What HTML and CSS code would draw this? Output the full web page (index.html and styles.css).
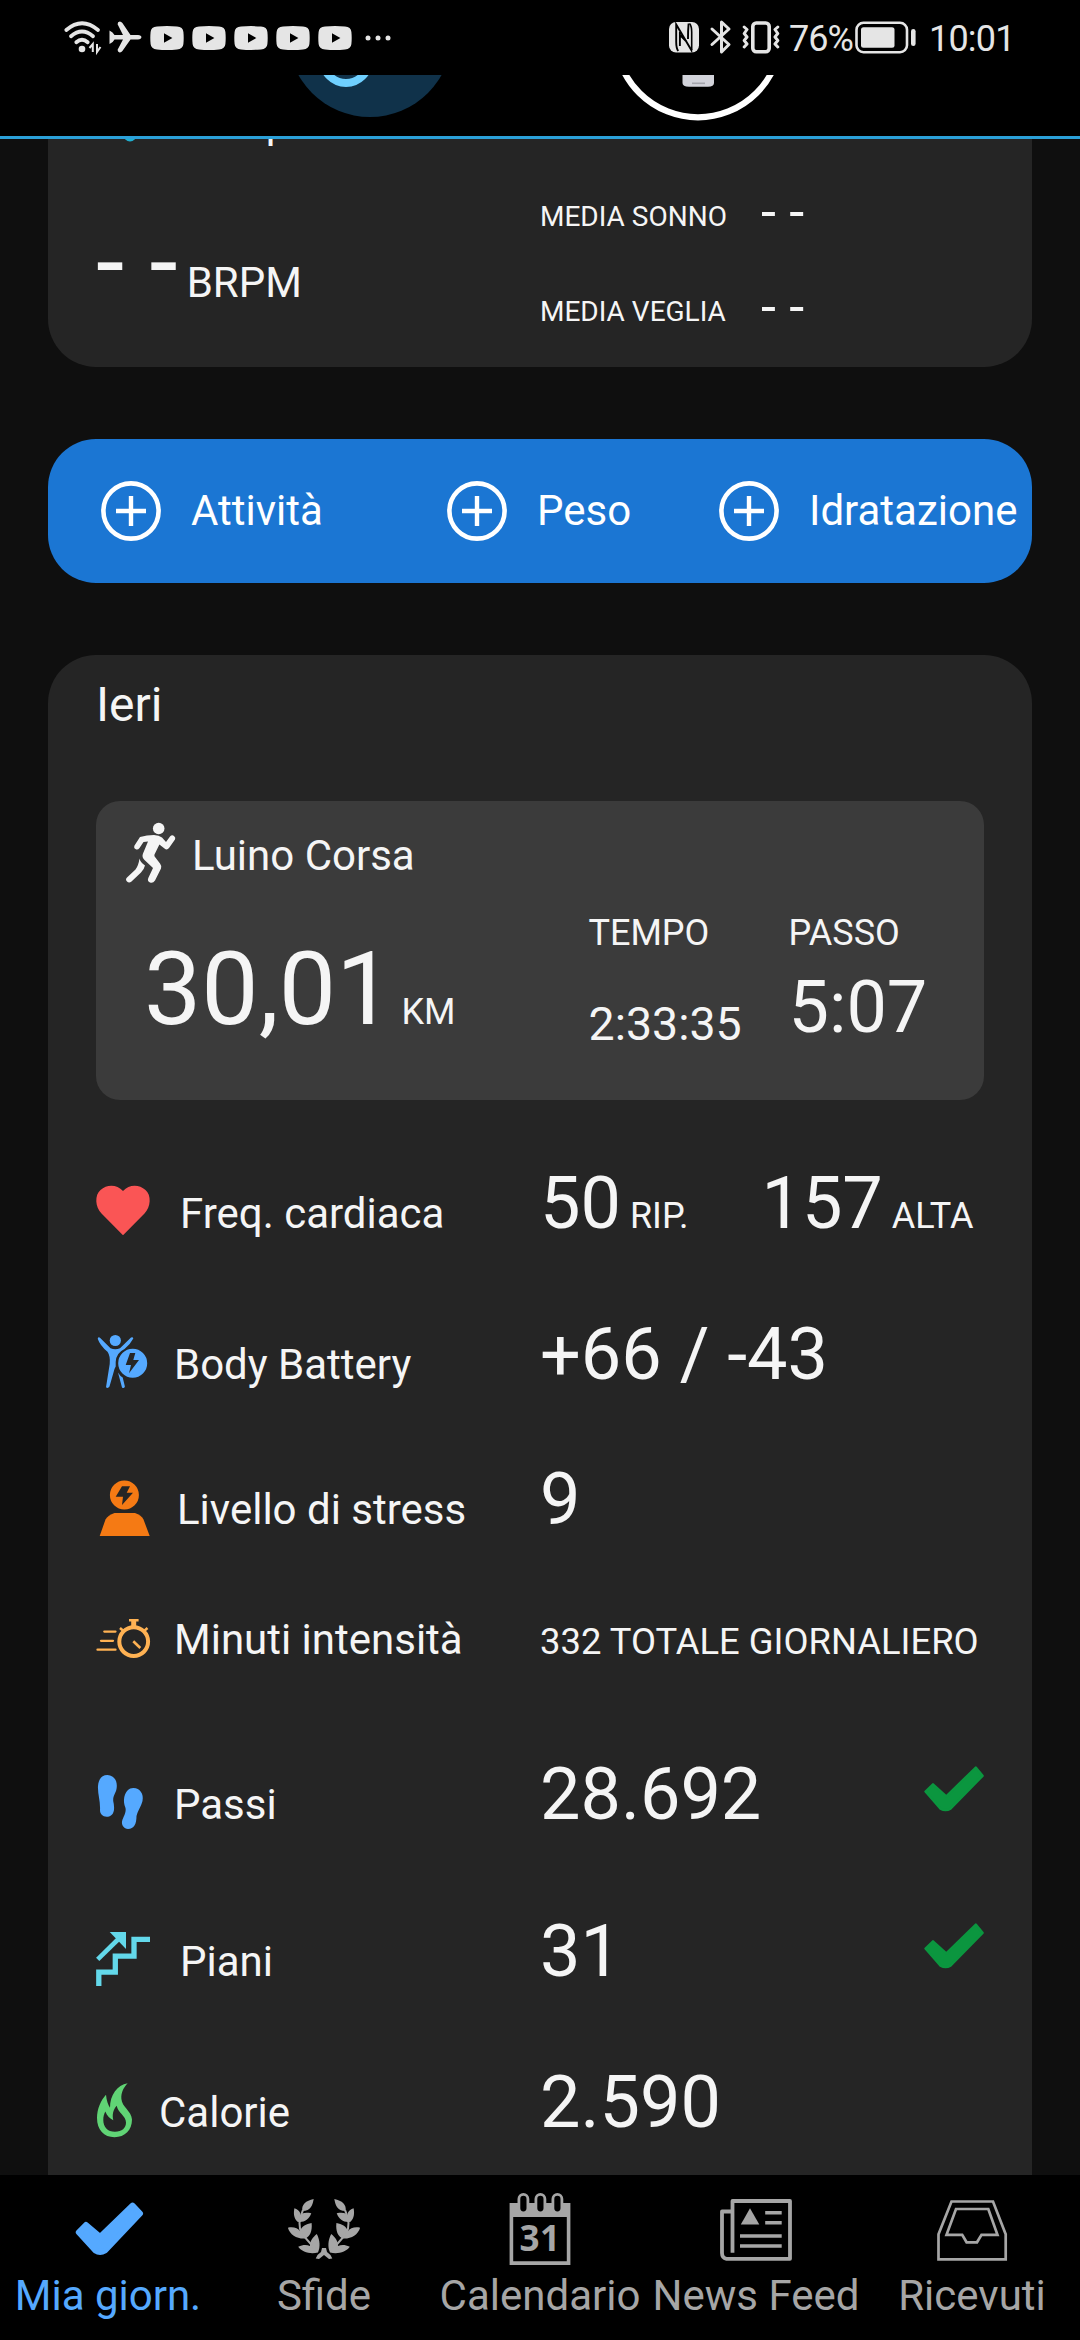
FILE: index.html
```html
<!DOCTYPE html>
<html lang="it">
<head>
<meta charset="utf-8">
<title>Mia giornata</title>
<link rel="stylesheet" href="styles.css">
</head>
<body>
<svg class="defs" aria-hidden="true">
  <symbol id="yt" viewBox="0 0 34 24"><path fill-rule="evenodd" d="M7 .6Q17-.4 27 .6Q33 1 33.4 6Q34 12 33.4 18Q33 23 27 23.4Q17 24.4 7 23.4Q1 23 .6 18Q0 12 .6 6Q1 1 7 .6ZM14 7.3V16.7L22.4 12Z"/></symbol>
  <symbol id="plus" viewBox="0 0 60 60"><circle cx="30" cy="30" r="27.6" fill="none" stroke="#fff" stroke-width="4.6"/><path d="M30 15V45M15 30H45" stroke="#fff" stroke-width="4.4"/></symbol>
  <symbol id="done" viewBox="0 0 60 46"><path d="M1.5 25.5L9 18.3L22.3 30.3L51.8 1.5L58.6 9.8L26.5 42.6Q21.5 45.6 16.5 42.6Z" fill="#0b963f" stroke="#0b963f" stroke-width="2.4" stroke-linejoin="round"/></symbol>
</svg>

<header class="header">
  <div class="status">
    <svg class="wifi" width="38" height="32" viewBox="0 0 38 32" fill="none" stroke="#e5e5e5" stroke-width="3.8" stroke-linecap="round"><path d="M2.3 9Q18 -4.5 34 9M7 15.3Q18 5.8 29 15.3M12.3 21.3Q18 16.3 23.7 21.3"/><circle cx="18" cy="28" r="3.3" fill="#e5e5e5" stroke="none"/><path stroke-width="2" stroke-linecap="butt" d="M28.8 31V23L25.5 27M33 23V31L36.5 26"/></svg>
    <svg class="plane" width="33" height="32" viewBox="0 0 33 32"><path d="M.5 9.5Q4 11 5.5 14H14L8.6 3.2Q8.5.6 10.8.4Q12.3.4 13.4 2L21.5 14H29Q32.4 14.3 32.4 16.2Q32.4 18 29 18.4H21.5L13.4 30Q12.3 31.6 10.6 31.4Q8.5 31 8.6 28.8L14 18.4H5.5Q4 21.5.5 23Z"/></svg>
    <div class="videos">
      <svg width="34" height="24"><use href="#yt"/></svg><svg width="34" height="24"><use href="#yt"/></svg><svg width="34" height="24"><use href="#yt"/></svg><svg width="34" height="24"><use href="#yt"/></svg><svg width="34" height="24"><use href="#yt"/></svg>
    </div>
    <svg class="more" width="26" height="6" viewBox="0 0 26 6"><circle cx="3" cy="3" r="2.5"/><circle cx="13" cy="3" r="2.5"/><circle cx="23" cy="3" r="2.5"/></svg>
    <svg class="nfc" width="30" height="31" viewBox="0 0 30 31"><rect width="30" height="30.5" rx="7"/><path d="M9.2 29Q7.2 26 7.2 20V2.500L22.300 28V27M10.900 10V24M11.500 13.500L17.500 19.500M19.600 1.500Q19 8 19 17" stroke="#000" stroke-width="1.900" fill="none"/><path d="M20.500 1.500Q22.700 4 22.700 10V28" stroke="#000" stroke-width="1.600" fill="none"/></svg>
    <svg class="bt" width="22" height="34" viewBox="0 0 22 34" fill="none" stroke="#e5e5e5" stroke-width="3" stroke-linejoin="round" stroke-linecap="round"><path d="M2 9L19 24.5L11.5 32V2L19 9L2 24.5"/></svg>
    <svg class="vibrate" width="38" height="33" viewBox="0 0 38 33" fill="none" stroke="#e5e5e5" stroke-width="3" stroke-linejoin="round" stroke-linecap="round"><rect x="10.8" y="2" width="16.4" height="28.8" rx="3.5" stroke-width="3.6"/><path d="M2.2 6L5 8.5L2.2 12.5L5 16L2.2 19.5L5 23L2.2 26M35.8 6L33 8.5L35.8 12.5L33 16L35.8 19.5L33 23L35.8 26"/></svg>
    <span class="pct">76%</span>
    <svg class="battery" width="62" height="33" viewBox="0 0 62 33"><rect x="1.5" y="1.8" width="50.5" height="29.4" rx="7" fill="none" stroke="#e5e5e5" stroke-width="2.6"/><rect x="6" y="6.3" width="33.5" height="20.4" rx="2.5"/><rect x="56" y="8" width="4.6" height="17" rx="2.3"/></svg>
    <span class="time">10:01</span>
  </div>
  <div class="devices">
    <svg width="164" height="61" viewBox="0 0 164 61"><circle cx="82" cy="-40" r="82" fill="#10324a"/><circle cx="58" cy="-15" r="23" fill="none" stroke="#6fd0ff" stroke-width="8"/></svg>
    <svg width="174" height="61" viewBox="0 0 174 61"><circle cx="87" cy="-40.5" r="82.8" fill="none" stroke="#fff" stroke-width="6.2"/><path d="M71.500 0H103V8Q103 11.700 97 11.700H78Q71.500 11.700 71.500 8Z" fill="#d2d3da"/><path d="M81 8.300H94" stroke="#a4a5ac" stroke-width="1.600"/></svg>
  </div>
</header>

<main class="content">
  <section class="card breath">
    <div class="breath-title"><svg width="54" height="50" viewBox="0 0 54 50"><circle cx="34" cy="37" r="6.500" fill="#1fb0d0"/></svg><h2>Respirazione</h2></div>
    <div class="breath-body">
      <div class="breath-now"><span class="dash-big">- -</span><span class="unit-lg">BRPM</span></div>
      <div class="breath-avg">
        <div><span class="caption">MEDIA SONNO</span><span class="dash">- -</span></div>
        <div><span class="caption">MEDIA VEGLIA</span><span class="dash">- -</span></div>
      </div>
    </div>
  </section>

  <section class="actions">
    <button><svg width="60" height="60"><use href="#plus"/></svg>Attività</button>
    <button><svg width="60" height="60"><use href="#plus"/></svg>Peso</button>
    <button><svg width="60" height="60"><use href="#plus"/></svg>Idratazione</button>
  </section>

  <section class="card yesterday">
    <h2 class="day">Ieri</h2>
    <article class="run">
      <div class="run-head">
        <svg width="60" height="64" viewBox="0 0 60 64" fill="#f5f5f5"><circle cx="38.700" cy="8.500" r="5.800"/><path d="M20 17Q27 15 34 15Q39 15 42 17.500L46 22L50 16.500Q52 14.500 54 16Q56 17.500 55 19.500L49 28Q47 30.500 44.500 28.500L39.400 24.500L34.500 34.500Q34 36 35 37L40 43.500Q42 46 41 48.500L35 60.500Q33 63.500 30 62.500Q27 61 28.300 58L33 48L24.500 40Q21.500 37 23 33.500L28 21.500L23.500 22L19.500 28Q17.500 30.500 15.500 29Q13.500 28 14.500 25.500Z"/><path d="M19.500 38.500Q20 42 25 45.500Q24 49.500 21 52.500L11.500 61.500Q9 63.500 7 61.500Q5 59.500 7 57.500L15.500 49.500Q18.500 45.500 19.500 38.500Z"/></svg>
        <h3>Luino Corsa</h3>
      </div>
      <div class="run-body">
        <div class="distance">30,01<span class="unit">KM</span></div>
        <div class="stat tempo"><span class="unit">TEMPO</span><span class="duration">2:33:35</span></div>
        <div class="stat passo"><span class="unit">PASSO</span><span class="pace">5:07</span></div>
      </div>
    </article>

    <div class="row hr">
      <svg class="i54" viewBox="0 0 54 60" fill="#fa5555"><path d="M27 52.300L5.500 30.500C-1 24-1.500 12 4.500 7C11 1 21 1.300 27 8C33 1.300 43 1 49.500 7C55.500 12 55 24 48.500 30.500Z"/></svg>
      <span class="label">Freq. cardiaca</span>
      <div class="value"><span class="num">50</span><span class="unit">RIP.</span><span class="num high">157</span><span class="unit">ALTA</span></div>
    </div>
    <div class="row body">
      <svg class="i48" viewBox="0 0 48 60" fill="#55a9ff"><circle cx="19.300" cy="6.500" r="5.600"/><path d="M1.700 4.700Q2.300 2.500 4 3.700L14.500 14.300Q19.300 16 24 14.300L35 3.400Q37 2.500 37.300 4.600Q34 11 28.500 15Q20 19 19.700 28V32.500L18.500 35L13.500 52.500Q12 54.800 10 53.300L13.700 30Q14.500 22 11.500 17.700Q4 11.500 1.700 4.700Z"/><path d="M22 38.500Q24 42 26.700 43.500L28.900 52.500Q28 55 26 53.500Z"/><path fill-rule="evenodd" d="M51.200 29.300a14.500 14.500 0 1 1-29 0a14.500 14.500 0 1 1 29 0ZM34 19L29.700 31H35L33 39.300L43 26H37.300L39.300 19Z"/></svg>
      <span class="label">Body Battery</span>
      <div class="value">+66 / -43</div>
    </div>
    <div class="row stress">
      <svg class="i51" viewBox="0 0 51 60" fill="#f57a14"><path fill-rule="evenodd" d="M42.900 16a14.500 14.500 0 1 1-29 0a14.500 14.500 0 1 1 29 0ZM26 7.300L19.700 17.700H27L26 26L37 13.700H30.700L34 7.300Z"/><path d="M18.500 34H39Q45.500 36 47.500 40.500L53.700 57H3.700L9.500 40.500Q12 36 18.500 34Z"/></svg>
      <span class="label">Livello di stress</span>
      <div class="value">9</div>
    </div>
    <div class="row minutes">
      <svg class="i48" viewBox="0 0 48 60" fill="none" stroke="#ffb253"><circle cx="37.700" cy="31.600" r="14.400" stroke-width="4"/><path stroke-width="2.500" d="M33 10.200H42.600M24 18L28 21.500M51.500 18L47.500 21.500"/><path d="M37.700 10V18" stroke-width="5"/><path stroke-width="2.600" d="M37.300 31.200L44.300 38"/><path stroke-width="2.300" stroke-linecap="round" d="M8.300 21.600H19.500M5 30.800H17M1.500 39.700H19.500"/></svg>
      <span class="label">Minuti intensità</span>
      <div class="value total">332 TOTALE GIORNALIERO</div>
    </div>
    <div class="row steps">
      <svg class="i48" viewBox="0 0 48 60" fill="#55a9ff"><path d="M11.500 1.100C18 1.300 22 7 20.500 15C19.500 20 17 21 17.200 27Q18.500 32 17.900 36.500C17 41 14 42.800 10.700 42.800C6.500 42.600 4 40 4 36C4.500 27 1.500 20 2 12C2.500 5 6 1 11.500 1.100Z"/><path d="M37.500 14.100C44 14.300 48 20 46.500 27C45 33 42 36 40.500 42C40.500 50 38 55 32 55C28 54.600 25.500 51.500 26 47.500C27 43 30.500 39 29.500 34C28 30 27.500 27 28.300 23C30 17 33 14 37.500 14.100Z"/></svg>
      <span class="label">Passi</span>
      <div class="value">28.692<svg class="done" width="60" height="46"><use href="#done"/></svg></div>
    </div>
    <div class="row floors">
      <svg class="i54" viewBox="0 0 54 60" fill="none" stroke="#63d8ea"><path stroke-width="5.300" d="M2.800 55V41.200H19.300V25.100H38V8.400H54"/><path stroke-width="4.600" d="M1.700 28.300L24 6.500"/><path d="M13.700 1H30V17.900Z" fill="#63d8ea" stroke="none"/></svg>
      <span class="label">Piani</span>
      <div class="value">31<svg class="done" width="60" height="46"><use href="#done"/></svg></div>
    </div>
    <div class="row calories">
      <svg class="i33" viewBox="0 0 33 60" fill="#60d475"><path fill-rule="evenodd" d="M31.700 1.200C21 3 14 13 14 25.700C12 23 10.500 18 10 12.700C5 18 1 27 1 36C1 48 8 55.200 18.500 55.200C29 55.200 36 48 36 37.500C35.500 29 26 25 25.400 17C25 11 27 6 31.700 1.200ZM20.700 23.800C22 31 30 34 30 40.500C30 46 26 49.800 19 49.800C11.500 49.800 7.300 45 7.300 38C7.300 34.500 8 32 9.300 29.500C11 34 14 36.500 17.300 38.300C16 33 17 28 20.700 23.800Z"/></svg>
      <span class="label">Calorie</span>
      <div class="value">2.590</div>
    </div>
  </section>
</main>

<nav class="tabs">
  <a class="tab active">
    <svg width="80" height="80" viewBox="0 0 80 80"><path d="M10.800 42.300L18 35L32.200 47L64.500 15.700L72 23.500L37 60.500Q32 63.500 27.500 60.500Z" fill="#55a9ff" stroke="#55a9ff" stroke-width="6" stroke-linejoin="round"/></svg>
    <span>Mia giorn.</span>
  </a>
  <a class="tab">
    <svg width="80" height="80" viewBox="0 0 80 80" fill="#a6a6a6">
      <g id="branch"><path d="M29.700 9C22 10.500 17 15 18.500 21C27 21 28.500 15 29.700 9ZM10.400 18.300C16 20 17 24 16 25.500C19 22.500 22 22.500 27.300 23.300C25 30 19 33 13.500 31.700C9.500 28 9.500 23 10.400 18.300ZM3.900 37.700C9 36.500 14 38 16 41C18 36 22 34 27.600 33C28.500 41 26 47 21 48.500C13 49 6 45 3.900 37.700ZM14.200 56.700C19 54.500 22.500 54.500 26 56C26 51 28.500 47.500 32.800 44C36 50 36.500 57 34 62.500C26 64.500 18 62 14.200 56.700Z"/><path d="M19 20Q12.500 34 18 44L32 60" fill="none" stroke="#a6a6a6" stroke-width="2"/></g>
      <use href="#branch" transform="matrix(-1 0 0 1 80 0)"/>
      <path d="M38 58H42L43 62Q47 64.500 48.300 68.500L45 69L40 65L35 69L31.700 68.500Q33 64.500 37 62Z"/>
    </svg>
    <span>Sfide</span>
  </a>
  <a class="tab">
    <svg width="80" height="80" viewBox="0 0 80 80"><path d="M9.600 13H70.400V75H9.600ZM13.200 27V71.300H66.800V27Z" fill="#a6a6a6" fill-rule="evenodd"/><g fill="#000" stroke="#a6a6a6" stroke-width="2.800"><rect x="18.900" y="4.400" width="9" height="18.400" rx="4.500"/><rect x="35.900" y="4.400" width="9" height="18.400" rx="4.500"/><rect x="52.900" y="4.400" width="9" height="18.400" rx="4.500"/></g><text x="40" y="61" text-anchor="middle" class="date">31</text></svg>
    <span>Calendario</span>
  </a>
  <a class="tab">
    <svg width="80" height="80" viewBox="0 0 80 80" fill="none" stroke="#a6a6a6" stroke-width="3.800" stroke-linejoin="round"><path d="M16.500 62.700V11H74V68.800H10.500Q6 68 6 63V21.500H16.500"/><path d="M34 18.300L24.800 34.500H43.300Z" fill="#a6a6a6" stroke="none"/><path stroke-width="3.600" d="M49.200 22.800H65.700M49.200 32.800H65.700M24 46H65.700M24 56H65.700"/></svg>
    <span>News Feed</span>
  </a>
  <a class="tab">
    <svg width="80" height="80" viewBox="0 0 80 80" fill="none" stroke="#a6a6a6" stroke-width="2.700"><path d="M19.500 11.500H61L73.700 44.300V69.400H6.500V44.300Z"/><path d="M24 19H56.300L65.500 44.800H49.500L45 52.300H34.600L30.200 44.800H14.500Z"/></svg>
    <span>Ricevuti</span>
  </a>
</nav>
</body>
</html>
```
FILE: styles.css
```css
* { box-sizing: border-box; }
html, body { margin: 0; }
body {
  width: 1080px; height: 2340px; overflow: hidden;
  display: flex; flex-direction: column;
  background: #0f0f0f; color: #f5f5f5;
  font-family: Roboto, sans-serif; font-size: 42px;
}
h2, h3 { margin: 0; font-weight: 400; }
svg { display: block; flex: none; overflow: visible; }
.defs { display: none; }

/* header */
.header { height: 139px; background: #000; border-bottom: 3px solid #2ba0d8; z-index: 1; }
.status { height: 75px; display: flex; align-items: center; padding: 0 0 1px 64px; fill: #e5e5e5; color: #e5e5e5; font-size: 36px; }
.plane { margin-left: 7px; }
.videos { display: flex; gap: 8px; margin: 2px 0 0 8px; }
.more { margin: 2px 0 0 13px; }
.nfc { margin-left: 278px; }
.bt { margin-left: 11px; }
.vibrate { margin-left: 10px; }
.pct { margin: 3px 0 0 9px; width: 66px; letter-spacing: -1px; }
.battery { margin-left: 0; }
.time { margin: 3px 0 0 12px; letter-spacing: -0.8px; }
.devices { height: 61px; display: flex; gap: 159px; padding-left: 288px; overflow: hidden; }
.devices svg { overflow: hidden; }

.content { flex: 1; min-height: 0; overflow: hidden; padding: 0 48px; }
.card { background: #252525; border-radius: 48px; padding: 0 48px; }

/* respiration */
.breath { margin-top: -61px; height: 289px; padding-top: 20px; }
.breath-title { display: flex; gap: 46px; line-height: 50px; }
.breath-title h2 { font-size: 42px; }
.breath-body { display: grid; grid-template-columns: 444px 1fr; }
.breath-now { display: flex; align-items: baseline; padding-top: 54px; line-height: 120px; }
.dash-big { font-size: 102px; }
.unit-lg { margin-left: 9px; }
.breath-avg { display: flex; flex-direction: column; padding-top: 33px; gap: 25px; }
.breath-avg div { display: flex; align-items: center; height: 70px; }
.caption { font-size: 28px; width: 221px; }
.dash { font-size: 54px; margin-top: -10px; }

/* quick actions */
.actions { margin-top: 72px; height: 144px; border-radius: 48px; background: #1b76d3; display: flex; align-items: center; padding-left: 53px; overflow: hidden; }
.actions button { display: flex; align-items: center; gap: 30px; padding: 0; border: 0; background: none; color: #fff; font: 42px/62px Roboto, sans-serif; flex: none; width: 346px; }
.actions button + button { width: 272px; }

/* yesterday */
.yesterday { margin-top: 72px; border-radius: 48px 48px 0 0; height: 1600px; }
.day { font-size: 48px; line-height: 60px; padding-top: 20px; height: 146px; }
.run { height: 299px; border-radius: 24px; background: #3b3b3b; padding: 19px 24px 0; }
.run-head { display: flex; gap: 12px; height: 92px; }
.run-head h3 { font-size: 42px; line-height: 72px; }
.run-body { display: grid; grid-template-columns: 444px 200px 1fr; margin-left: 24px; }
.distance { font-size: 102px; line-height: 120px; padding-top: 17px; white-space: nowrap; }
.distance .unit { margin-left: 8px; }
.unit { font-size: 36px; }
.stat { display: flex; flex-direction: column; line-height: 42px; }
.duration { font-size: 46.5px; line-height: 56px; margin-top: 42px; }
.pace { font-size: 72px; line-height: 84px; margin-top: 12px; }
.tempo, .passo { margin-left: 0.5px; }

.row { display: grid; grid-template-columns: auto 1fr 444px; align-items: baseline; }
.row > svg { align-self: start; height: 60px; margin-top: 22px; }
.i54 { width: 54px; }
.i51 { width: 51px; }
.i48 { width: 48px; }
.i33 { width: 33px; }
.label { margin-left: 30px; white-space: nowrap; }
.value { display: flex; align-items: baseline; font-size: 72px; line-height: 84px; padding-top: 1px; white-space: nowrap; }
.value .unit { margin-left: 9px; }
.row .total { font-size: 36.4px; padding-top: 12px; }
.high { margin-left: 73px; }
.done { align-self: flex-start; margin: 13px 0 0 auto; }
.hr { margin-top: 61px; height: 151px; }
.body { height: 145px; }
.stress { height: 131px; }
.minutes { height: 164px; }
.steps { height: 157px; }
.floors { height: 151px; }

/* bottom tabs */
.tabs { height: 165px; background: #000; display: grid; grid-template-columns: repeat(5, 216px); }
.tab { display: flex; flex-direction: column; align-items: center; padding-top: 15px; color: #a6a6a6; white-space: nowrap; line-height: 52px; }
.active { color: #55a9ff; }
.date { font: 700 35px "Open Sans", sans-serif; letter-spacing: 0.5px; fill: #a6a6a6; }
```
